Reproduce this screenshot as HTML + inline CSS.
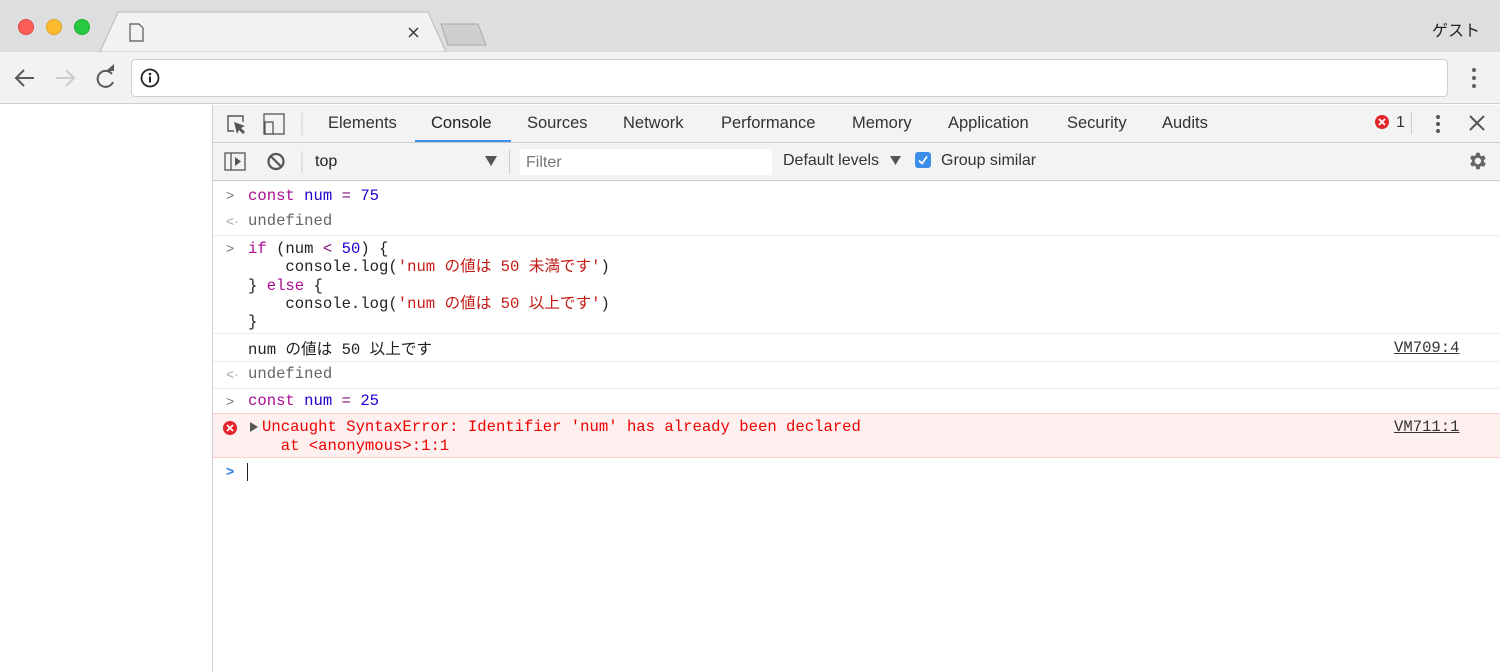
<!DOCTYPE html>
<html><head><meta charset="utf-8"><style>
*{margin:0;padding:0;box-sizing:border-box}
body{width:1500px;height:672px;overflow:hidden;background:#fff;font-family:"Liberation Sans","Noto Sans CJK JP",sans-serif;position:relative}
.a{position:absolute}
.mono{font-family:"Liberation Mono","Noto Sans CJK JP",monospace;font-size:15.6px;white-space:pre}
.tab{position:absolute;top:114px;font-size:16.5px;color:#333}
.row{position:absolute;left:213px;right:0;border-bottom:1px solid #ececec}
.kw{color:#aa0d91}.v{color:#1c00cf}.s{color:#c41a16}.op{color:#881280}
.gt{position:absolute;left:226px;color:#777;font-size:14px}
</style></head><body>
<div class="a" style="left:0;top:0;width:1500px;height:52px;background:#dedede"></div>
<div class="a" style="left:18px;top:19px;width:16px;height:16px;border-radius:50%;background:#fc5f57;border:1px solid #e0443e"></div>
<div class="a" style="left:46px;top:19px;width:16px;height:16px;border-radius:50%;background:#fdbc2e;border:1px solid #dea123"></div>
<div class="a" style="left:74px;top:19px;width:16px;height:16px;border-radius:50%;background:#28c840;border:1px solid #1dad2b"></div>
<svg class="a" style="left:0;top:0" width="500" height="53">
<path d="M100 52 L118 12 L428 12 L446 52 Z" fill="#f2f2f2" stroke="#b9b9b9"/>
<path d="M441 24 L478 24 L486 45 L448 45 Z" fill="#cfcfcf" stroke="#aaa"/>
<path d="M130 24 h9 l4 4 v13 h-13 z" fill="none" stroke="#555" stroke-width="1.2"/>
<path d="M409 28 l9 9 M418 28 l-9 9" stroke="#333" stroke-width="1.4"/>
</svg>
<div class="a" style="left:1432px;top:17px;font-size:16px;color:#222">ゲスト</div>
<div class="a" style="left:0;top:52px;width:1500px;height:52px;background:#f2f2f2;border-bottom:1px solid #cfcfcf"></div>
<svg class="a" style="left:0;top:52px" width="130" height="52">
<path d="M34 26 H16 M24 18 l-8 8 l8 8" fill="none" stroke="#5a5a5a" stroke-width="2"/>
<path d="M56 26 H74 M66 18 l8 8 l-8 8" fill="none" stroke="#ccc" stroke-width="2"/>
<path d="M112 22 A8 8 0 1 0 113 30" fill="none" stroke="#5a5a5a" stroke-width="2"/>
<path d="M106 19 h8 v-7 z" fill="#5a5a5a"/>
</svg>
<div class="a" style="left:131px;top:59px;width:1317px;height:38px;background:#fff;border:1px solid #cfcfcf;border-radius:4px"></div>
<svg class="a" style="left:139px;top:67px" width="22" height="22"><circle cx="11" cy="11" r="8.5" fill="none" stroke="#222" stroke-width="1.8"/><circle cx="11" cy="7" r="1.3" fill="#222"/><rect x="10" y="9.5" width="2" height="6" fill="#222"/></svg>
<svg class="a" style="left:1466px;top:66px" width="16" height="24"><circle cx="8" cy="4" r="2" fill="#5f5f5f"/><circle cx="8" cy="12" r="2" fill="#5f5f5f"/><circle cx="8" cy="20" r="2" fill="#5f5f5f"/></svg>
<div class="a" style="left:212px;top:105px;width:1px;height:567px;background:#cdcdcd"></div>
<div class="a" style="left:213px;top:105px;width:1287px;height:38px;background:#f3f3f3;border-bottom:1px solid #cdcdcd"></div>
<div class="a" style="left:213px;top:143px;width:1287px;height:38px;background:#f3f3f3;border-bottom:1px solid #cdcdcd"></div>
<svg class="a" style="left:213px;top:105px" width="100" height="76">
<path d="M21 26 h-6 v-15 h15 v6" fill="none" stroke="#555" stroke-width="1.4"/>
<path d="M21 17 l3 12 l2 -4 l4 4 l2 -2 l-4 -4 l4 -2 z" fill="#555"/>
<rect x="51" y="9" width="20" height="20" fill="none" stroke="#555" stroke-width="1.3"/>
<rect x="52" y="17" width="8" height="12" fill="#f3f3f3" stroke="#555" stroke-width="1.3"/>
<line x1="89" y1="8" x2="89" y2="30" stroke="#ccc"/>
<rect x="12" y="48" width="20" height="17" fill="none" stroke="#555" stroke-width="1.3"/>
<line x1="18" y1="48" x2="18" y2="65" stroke="#555" stroke-width="1.3"/>
<path d="M22 52 l6 4.5 l-6 4.5z" fill="#555"/>
<circle cx="63" cy="56.5" r="7.5" fill="none" stroke="#555" stroke-width="2.2"/>
<line x1="58" y1="51.5" x2="68" y2="61.5" stroke="#555" stroke-width="2.2"/>
<line x1="89" y1="46" x2="89" y2="68" stroke="#ccc"/>
</svg>
<div class="tab" style="left:328px">Elements</div>
<div class="tab" style="left:431px;color:#222">Console</div>
<div class="a" style="left:415px;top:140px;width:96px;height:2px;background:#3a8ef0"></div>
<div class="tab" style="left:527px">Sources</div>
<div class="tab" style="left:623px">Network</div>
<div class="tab" style="left:721px">Performance</div>
<div class="tab" style="left:852px">Memory</div>
<div class="tab" style="left:948px">Application</div>
<div class="tab" style="left:1067px">Security</div>
<div class="tab" style="left:1162px">Audits</div>
<svg class="a" style="left:1374px;top:114px" width="16" height="16"><circle cx="8" cy="8" r="7" fill="#e3262b"/><path d="M5 5 l6 6 M11 5 l-6 6" stroke="#fff" stroke-width="1.8"/></svg>
<div class="a" style="left:1396px;top:114px;font-size:16px;color:#333">1</div>
<div class="a" style="left:1411px;top:112px;width:1px;height:22px;background:#ccc"></div>
<svg class="a" style="left:1430px;top:113px" width="16" height="22"><circle cx="8" cy="4" r="2" fill="#555"/><circle cx="8" cy="11" r="2" fill="#555"/><circle cx="8" cy="18" r="2" fill="#555"/></svg>
<svg class="a" style="left:1468px;top:114px" width="18" height="18"><path d="M2 2 l14 14 M16 2 l-14 14" stroke="#555" stroke-width="2"/></svg>
<div class="a" style="left:315px;top:153px;font-size:16px;color:#222">top</div>
<svg class="a" style="left:485px;top:156px" width="12" height="10"><path d="M0 0 h12 l-6 10z" fill="#555"/></svg>
<div class="a" style="left:509px;top:150px;width:1px;height:24px;background:#ccc"></div>
<div class="a" style="left:520px;top:149px;width:252px;height:26px;background:#fff"></div>
<div class="a" style="left:526px;top:154px;font-size:16px;color:#777">Filter</div>
<div class="a" style="left:783px;top:152px;font-size:16px;color:#333">Default levels</div>
<svg class="a" style="left:890px;top:156px" width="11" height="9"><path d="M0 0 h11 l-5.5 9z" fill="#555"/></svg>
<div class="a" style="left:915px;top:152px;width:16px;height:16px;border-radius:3px;background:#3b8de8"></div>
<svg class="a" style="left:915px;top:152px" width="16" height="16"><path d="M4 8.5 l3 3 l5 -7" fill="none" stroke="#fff" stroke-width="1.8"/></svg>
<div class="a" style="left:941px;top:152px;font-size:16px;color:#333">Group similar</div>
<svg class="a" style="left:1466px;top:150px" width="22" height="22" viewBox="0 0 24 24"><path fill="#666" d="M19.4 13a7.5 7.5 0 0 0 0-2l2.1-1.6-2-3.5-2.5 1a7 7 0 0 0-1.7-1L15 3h-4l-.4 2.7a7 7 0 0 0-1.7 1l-2.5-1-2 3.5L6.6 11a7.5 7.5 0 0 0 0 2l-2.1 1.6 2 3.5 2.5-1a7 7 0 0 0 1.7 1L11 21h4l.4-2.7a7 7 0 0 0 1.7-1l2.5 1 2-3.5zM13 15.5a3.5 3.5 0 1 1 0-7 3.5 3.5 0 0 1 0 7z"/></svg>
<div class="row" style="top:235px;height:1px"></div>
<div class="row" style="top:333px;height:1px"></div>
<div class="row" style="top:361px;height:1px"></div>
<div class="row" style="top:388px;height:1px"></div>
<div class="a" style="left:213px;top:413px;width:1287px;height:45px;background:#fff0f0;border-top:1px solid #f7cfcf;border-bottom:1px solid #f7cfcf"></div>
<div class="gt" style="top:187px">&gt;</div>
<div class="gt" style="top:213px;color:#aaa">&lt;·</div>
<div class="gt" style="top:240px">&gt;</div>
<div class="gt" style="top:366px;color:#aaa">&lt;·</div>
<div class="gt" style="top:393px">&gt;</div>
<div class="gt" style="top:463px;color:#2a7ae2;font-weight:bold">&gt;</div>
<svg class="a" style="left:222px;top:420px" width="16" height="16"><circle cx="8" cy="8" r="7" fill="#e3262b"/><path d="M5 5 l6 6 M11 5 l-6 6" stroke="#fff" stroke-width="1.8"/></svg>
<svg class="a" style="left:250px;top:422px" width="8" height="10"><path d="M0 0 l8 5 l-8 5z" fill="#555"/></svg>
<div class="a mono" style="left:248px;top:187px;color:#222"><span class="kw">const</span> <span class="v">num</span> <span class="op">=</span> <span class="v">75</span></div>
<div class="a mono" style="left:248px;top:212px;color:#666">undefined</div>
<div class="a mono" style="left:248px;top:240px;line-height:18.3px;color:#222"><span class="kw">if</span> (num <span class="op">&lt;</span> <span class="v">50</span>) {
    console.log(<span class="s">'num の値は 50 未満です'</span>)
} <span class="kw">else</span> {
    console.log(<span class="s">'num の値は 50 以上です'</span>)
}</div>
<div class="a mono" style="left:248px;top:337px;color:#222">num の値は 50 以上です</div>
<div class="a mono" style="left:1394px;top:339px;color:#333;text-decoration:underline">VM709:4</div>
<div class="a mono" style="left:248px;top:365px;color:#666">undefined</div>
<div class="a mono" style="left:248px;top:392px"><span class="kw">const</span> <span class="v">num</span> <span class="op">=</span> <span class="v">25</span></div>
<div class="a mono" style="left:262px;top:418px;line-height:18.5px;color:#e00">Uncaught SyntaxError: Identifier 'num' has already been declared
  at &lt;anonymous&gt;:1:1</div>
<div class="a mono" style="left:1394px;top:418px;color:#333;text-decoration:underline">VM711:1</div>
<div class="a" style="left:247px;top:463px;width:1px;height:18px;background:#222"></div>
</body></html>
